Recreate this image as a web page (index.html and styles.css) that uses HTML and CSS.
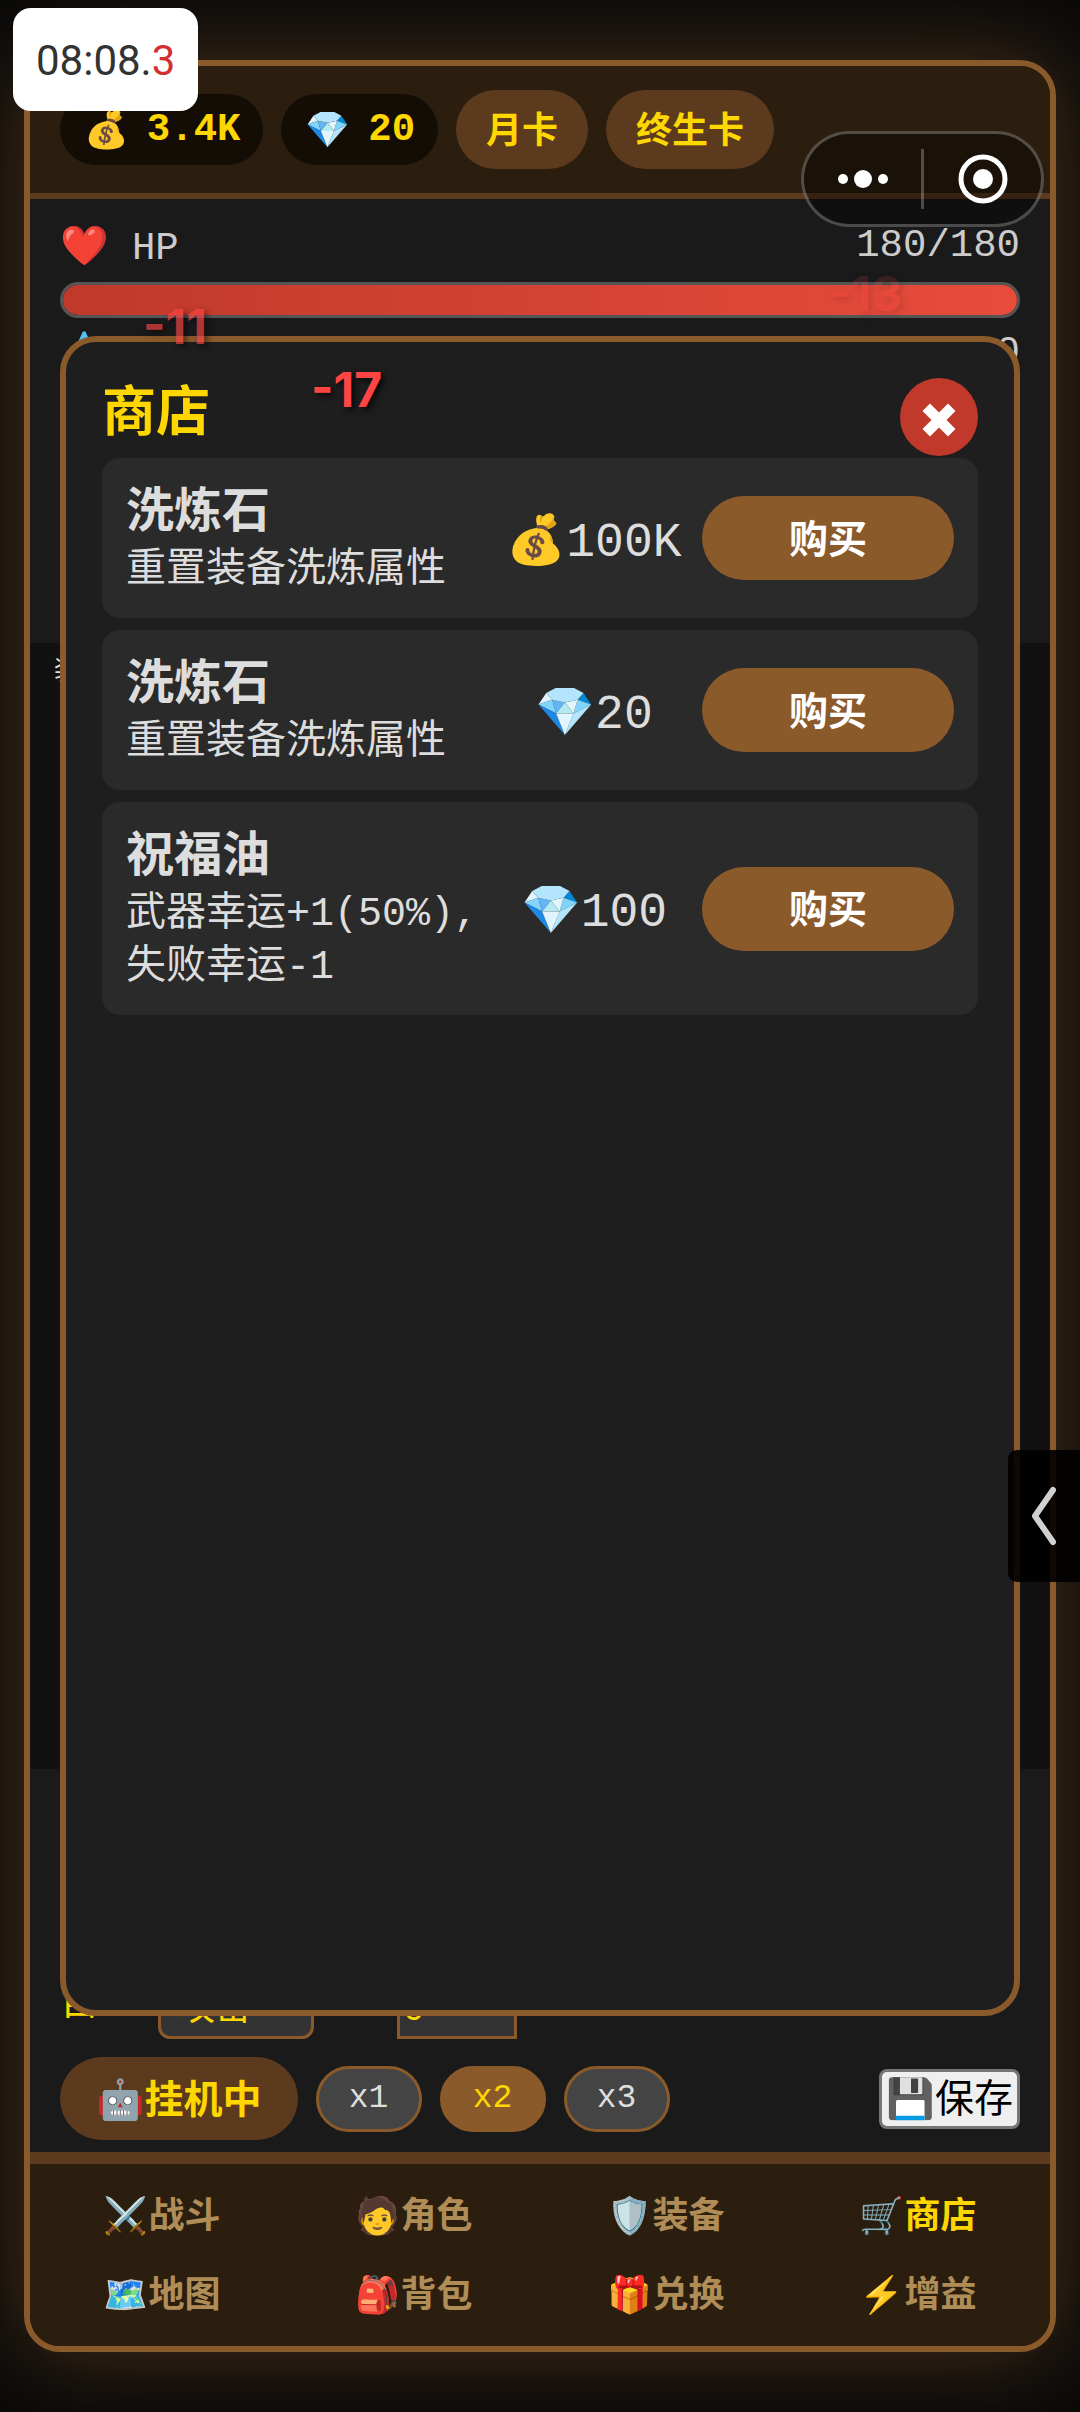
FILE: index.html
```html
<!DOCTYPE html>
<html lang="zh-CN">

<head>
    <meta charset="UTF-8">
    <meta name="viewport" content="width=device-width, initial-scale=1.0">
    <title>商店</title>
    <link rel="stylesheet" href="styles.css">
</head>

<body>
    <div class="game">
        <!-- Top bar -->
        <header class="top-bar">
            <div class="coin"><span class="emoji">💰</span><span>3.4K</span></div>
            <div class="coin"><span class="emoji">💎</span><span>20</span></div>
            <button class="card-btn">月卡</button>
            <button class="card-btn">终生卡</button>
        </header>

        <!-- Player stats -->
        <section class="stats">
            <div class="stat-label">
                <span class="name"><span class="emoji">❤️</span> HP</span>
                <span>180/180</span>
            </div>
            <div class="bar"><div class="bar-fill hp" style="width: 100%"></div></div>
            <div class="stat-label">
                <span class="name"><span class="emoji">💧</span></span>
                <span>0</span>
            </div>
        </section>

        <section class="battle-log">装</section>

        <!-- Auto fight controls -->
        <section class="controls">
            <div class="auto-row">
                <label for="skill">自</label>
                <select id="skill">
                    <option>攻击</option>
                </select>
                <input id="limit" type="text" value="0" aria-label="0">
            </div>
            <div class="speed-row">
                <button class="idle-btn"><span class="emoji">🤖</span>挂机中</button>
                <button class="speed">x1</button>
                <button class="speed on">x2</button>
                <button class="speed">x3</button>
                <button class="save-btn"><span class="emoji">💾</span>保存</button>
            </div>
        </section>

        <!-- Bottom menu -->
        <nav class="menu">
            <a href="#fight"><span class="emoji">⚔️</span>战斗</a>
            <a href="#role"><span class="emoji">🧑</span>角色</a>
            <a href="#equip"><span class="emoji">🛡️</span>装备</a>
            <a href="#shop" class="active"><span class="emoji">🛒</span>商店</a>
            <a href="#map"><span class="emoji">🗺️</span>地图</a>
            <a href="#bag"><span class="emoji">🎒</span>背包</a>
            <a href="#redeem"><span class="emoji">🎁</span>兑换</a>
            <a href="#buff"><span class="emoji">⚡</span>增益</a>
        </nav>

        <!-- Shop window -->
        <div class="shop" role="dialog" aria-labelledby="shop-title">
            <div class="shop-head">
                <h2 id="shop-title">商店</h2>
                <button class="close" aria-label="关闭">
                    <svg viewBox="0 0 32 32"><path d="M4 4 28 28M28 4 4 28" stroke="#fff" stroke-width="10" /></svg>
                </button>
            </div>
            <div class="item">
                <div>
                    <h3>洗炼石</h3>
                    <p>重置装备洗炼属性</p>
                </div>
                <div class="price"><span class="emoji">💰</span>100K</div>
                <button class="buy">购买</button>
            </div>
            <div class="item">
                <div>
                    <h3>洗炼石</h3>
                    <p>重置装备洗炼属性</p>
                </div>
                <div class="price"><span class="emoji">💎</span>20</div>
                <button class="buy">购买</button>
            </div>
            <div class="item">
                <div>
                    <h3>祝福油</h3>
                    <p>武器幸运+1(50%),失败幸运-1</p>
                </div>
                <div class="price"><span class="emoji">💎</span>100</div>
                <button class="buy">购买</button>
            </div>
        </div>
    </div>

    <!-- Floating damage numbers -->
    <span class="damage d1">-11</span>
    <span class="damage d2">-17</span>
    <span class="damage d3">-13</span>

    <div class="timer">08:08.<span>3</span></div>

    <div class="capsule">
        <button aria-label="更多">
            <svg width="50" height="50" viewBox="0 0 50 50" fill="#fff">
                <circle cx="5" cy="25" r="5" />
                <circle cx="25" cy="25" r="9" />
                <circle cx="45" cy="25" r="5" />
            </svg>
        </button>
        <button aria-label="退出">
            <svg width="50" height="50" viewBox="0 0 50 50">
                <circle cx="25" cy="25" r="22" fill="none" stroke="#fff" stroke-width="5" />
                <circle cx="25" cy="25" r="10" fill="#fff" />
            </svg>
        </button>
    </div>

    <button class="drawer" aria-label="展开">
        <svg width="24" height="60" viewBox="0 0 24 60">
            <path d="M21 4 3 30 21 56" fill="none" stroke="#d0d0d0" stroke-width="6" stroke-linecap="round" stroke-linejoin="round" />
        </svg>
    </button>
</body>

</html>
```
FILE: styles.css
```css
* {
    box-sizing: border-box;
    margin: 0;
    padding: 0;
}

body {
    position: relative;
    min-height: 100vh;
    padding: 60px 24px;
    background-color: #0a0a0a;
    color: #ddd;
    font-family: "Liberation Mono", "Noto Sans CJK SC", monospace;
    font-size: 39px;
}

button,
input,
select {
    font-family: inherit;
    font-size: 39px;
    border: none;
}

svg {
    display: block;
    margin: auto;
}

.emoji {
    font-family: "Noto Color Emoji", sans-serif;
    font-weight: normal;
}

.game {
    position: relative;
    display: flex;
    flex-direction: column;
    min-height: calc(100vh - 120px);
    border: 6px solid #8b5a2b;
    border-radius: 36px;
    background-color: #1a1a1a;
    box-shadow: 0 0 90px rgba(139, 90, 43, 0.5);
}

/* top bar */
.top-bar {
    display: flex;
    align-items: center;
    gap: 18px;
    padding: 24px 30px;
    background-color: #2c1e0f;
    border-bottom: 6px solid #5c3a1e;
    border-radius: 30px 30px 0 0;
}

.coin {
    display: flex;
    gap: 18px;
    padding: 2px 23px 0 24px;
    height: 71px;
    line-height: 69px;
    border-radius: 36px;
    background-color: #140d05;
    color: #ffd700;
    font-weight: bold;
}

.coin .emoji {
    font-size: 36px;
}

.card-btn {
    height: 79px;
    padding: 0 30px 4px;
    border-radius: 40px;
    background-color: #5c3a1e;
    color: #ffd700;
    font-size: 36px;
    font-weight: bold;
}

/* stats */
.stats {
    min-height: 444px;
    padding: 18px 30px;
}

.stat-label {
    display: flex;
    justify-content: space-between;
    height: 59px;
    line-height: 59px;
    color: #ccc;
}

.bar {
    height: 36px;
    margin: 6px 0;
    border: 3px solid #555;
    border-radius: 18px;
    background-color: #333;
    overflow: hidden;
}

.bar-fill {
    height: 100%;
}

.hp {
    background: linear-gradient(90deg, #c0392b, #e74c3c);
}

.battle-log {
    flex: 1;
    padding: 6px 24px;
    background-color: #111;
    font-size: 27px;
}

/* controls */
.controls {
    display: flex;
    flex-direction: column;
    justify-content: flex-end;
    gap: 18px;
    min-height: 383px;
    padding: 0 30px 12px;
}

.auto-row {
    display: grid;
    grid-template-columns: 98px 239px 120px;
    align-items: center;
    color: #ffd700;
}

.auto-row label {
    padding-bottom: 12px;
}

.auto-row select,
.auto-row input {
    height: 72px;
    padding-top: 15px;
    border: 3px solid #8b5a2b;
    background-color: #333;
    color: #ffd700;
    font-size: 36px;
}

.auto-row select {
    appearance: none;
    width: 156px;
    padding-left: 18px;
    border-radius: 12px;
}

.auto-row input {
    width: 100%;
    padding-left: 3px;
}

.speed-row {
    display: flex;
    align-items: center;
    gap: 18px;
}

.idle-btn {
    height: 83px;
    padding: 0 36px 4px;
    border-radius: 42px;
    background-color: #5c3a1e;
    color: #ffd700;
    font-weight: bold;
}

.speed {
    width: 106px;
    height: 66px;
    border: 3px solid #8b5a2b;
    border-radius: 33px;
    background-color: #444;
    color: #ddd;
    font-size: 33px;
}

.speed.on {
    background-color: #8b5a2b;
    color: #ffd700;
}

.save-btn {
    height: 60px;
    margin-left: auto;
    padding: 0 4px;
    border: 3px solid #767676;
    border-radius: 8px;
    background-color: #efefef;
    color: #000;
    line-height: 54px;
}

/* bottom menu */
.menu {
    display: grid;
    grid-template-columns: repeat(4, 1fr);
    padding: 13px 6px 11px;
    background-color: #2c1e0f;
    border-top: 12px solid #5c3a1e;
    border-radius: 0 0 30px 30px;
}

.menu a {
    height: 79px;
    line-height: 79px;
    color: #b08d57;
    font-size: 36px;
    font-weight: bold;
    text-align: center;
    text-decoration: none;
}

.menu .active {
    color: #ffd700;
}

/* shop window */
.shop {
    position: absolute;
    top: 270px;
    right: 30px;
    bottom: 330px;
    left: 30px;
    padding: 36px;
    border: 6px solid #8b5a2b;
    border-radius: 36px;
    background-color: #1e1e1e;
}

.shop-head {
    display: flex;
    align-items: flex-start;
    justify-content: space-between;
    height: 80px;
}

.shop h2 {
    color: #ffd700;
    font-size: 54px;
    line-height: 78px;
}

.close {
    display: flex;
    align-items: center;
    justify-content: center;
    width: 78px;
    height: 78px;
    padding-top: 6px;
    border-radius: 50%;
    background-color: #c0392b;
}

.close svg {
    width: 34px;
    height: 34px;
}

.item {
    display: grid;
    grid-template-columns: 1fr 180px 252px;
    gap: 18px;
    align-items: center;
    margin-bottom: 12px;
    padding: 27px 24px 21px;
    border-radius: 18px;
    background-color: #2a2a2a;
}

.item h3 {
    font-size: 48px;
    line-height: 59px;
}

.item p {
    font-size: 40px;
    line-height: 53px;
}

.price {
    font-size: 48px;
    line-height: 60px;
    text-align: center;
    white-space: nowrap;
}

.buy {
    height: 84px;
    margin-bottom: 6px;
    padding-bottom: 4px;
    border-radius: 42px;
    background-color: #8b5a2b;
    color: #fff;
    font-weight: bold;
}

/* things floating over the game */
.damage {
    position: absolute;
    color: #ff4444;
    font-family: Inter, sans-serif;
    font-size: 48px;
    font-weight: bold;
    line-height: 58px;
    text-shadow: 3px 3px 6px rgba(0, 0, 0, 0.8);
}

.d1 {
    top: 298px;
    left: 143px;
    opacity: 0.65;
}

.d2 {
    top: 361px;
    left: 311px;
}

.d3 {
    top: 265px;
    left: 828px;
    opacity: 0.15;
}

.timer {
    position: absolute;
    top: 8px;
    left: 13px;
    padding: 3px 23px 0;
    border-radius: 18px;
    background-color: #fff;
    color: #333;
    font-family: Roboto, sans-serif;
    font-size: 42px;
    line-height: 100px;
}

.timer span {
    color: #d32f2f;
}

.capsule {
    position: absolute;
    top: 131px;
    right: 36px;
    display: flex;
    align-items: center;
    width: 243px;
    height: 96px;
    border: 3px solid rgba(255, 255, 255, 0.25);
    border-radius: 48px;
    background-color: rgba(0, 0, 0, 0.4);
}

.capsule button {
    flex: 1;
    height: 60px;
    background: none;
}

.capsule button + button {
    border-left: 3px solid rgba(255, 255, 255, 0.25);
}

.drawer {
    position: absolute;
    top: 1450px;
    right: 0;
    width: 72px;
    height: 132px;
    border-radius: 9px 0 0 9px;
    background-color: rgba(0, 0, 0, 0.9);
}
```
